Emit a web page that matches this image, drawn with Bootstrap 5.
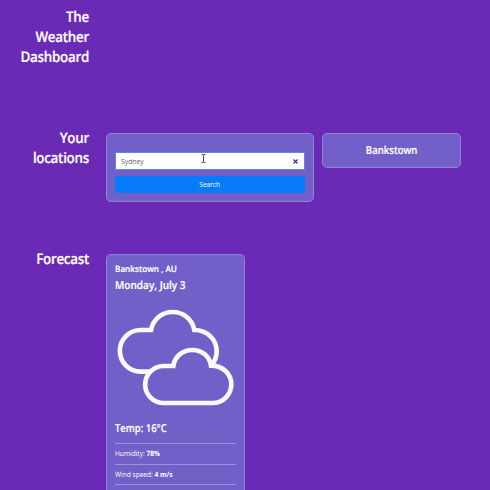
<!DOCTYPE html>
<html lang="en">
<head>
<meta charset="utf-8">
<meta name="viewport" content="width=device-width, initial-scale=1">
<title>The Weather Dashboard</title>
<link href="https://cdn.jsdelivr.net/npm/bootstrap@5.3.0/dist/css/bootstrap.min.css" rel="stylesheet">
<style>
html{overflow:hidden}
body{background:#6a2ab6;color:#fff;font-family:"Open Sans","Noto Sans",sans-serif;text-rendering:geometricPrecision;height:490px;overflow:hidden}
.dash-row{height:121px;padding-top:12px}
.dash-row.last{height:248px}
.dash-row.first{padding-top:0}
.side{width:89px;flex:none;font-size:14.7px;line-height:20px;font-weight:600;margin:-5px 17px 0 0;letter-spacing:-.3px;transform:scaleX(.912);transform-origin:89px 0}
.side,.place,.city,.day,.temp{-webkit-text-stroke:.2px #fff}
.first .side{margin-top:7px}
.panel{background:#725fc7;border:1px solid #8b84db;border-radius:5px}
.search-panel{width:208px;height:69px;padding:18px 8px 8px}
.field{height:18px;border:1px solid #5b86ea;border-radius:1px;background:#fff;padding:0 5px}
.field input{font-size:7.5px;line-height:15px;color:#62606f;width:60px;transform:scaleX(.91);transform-origin:left}
.clear{width:5px;height:5px;margin-right:1px}
.pointer{left:200px;top:154px;width:7px;height:9px}
.go{height:17px;margin-top:6px;border-radius:0;border:0;background:#087bfa;font-size:7.4px;line-height:17px;color:#fff}
.go:hover{background:#087bfa;color:#fff}
.place{width:139px;height:35px;margin-left:8px;font-size:11px;line-height:33px;font-weight:600}
.slim{display:inline-block;transform:scaleX(.89);transform-origin:left}
.place .slim,.go .slim{transform-origin:center}
.place .slim{transform:scaleX(.87)}
.forecast{width:139px;height:236px;padding:7px 8px 0;border-bottom:0;border-radius:5px 5px 0 0}
.city{font-size:8.6px;line-height:14px;font-weight:600}
.city .slim{transform:scaleX(.95)}
.day{font-size:11px;line-height:14px;font-weight:600;margin-top:3px}
.day .slim{transform:scaleX(.915)}
.sky{width:140px;height:115px;margin:7px -10px 0}
.temp{font-size:11px;line-height:14px;font-weight:600;margin-top:7px;margin-bottom:7px}
.temp .slim{transform:scaleX(.86)}
.fact{border-top:1px solid #9296df;height:20.6px;font-size:7.4px;line-height:20.6px}
.fact:last-child{height:5px}
</style>
<script src="https://cdn.jsdelivr.net/npm/bootstrap@5.3.0/dist/js/bootstrap.bundle.min.js"></script>
</head>
<body>
<header class="dash-row first d-flex">
  <h1 class="side text-end">The<br>Weather<br>Dashboard</h1>
</header>
<main>
<section class="dash-row d-flex align-items-start">
  <h2 class="side text-end">Your<br>locations</h2>
  <form class="panel search-panel">
    <div class="field d-flex align-items-center justify-content-between">
      <input class="border-0 bg-transparent p-0" type="text" value="Sydney" aria-label="City">
      <svg class="clear" viewBox="0 0 5 5" stroke="#35328c" stroke-width="1.200"><path d="M.5.5l4 4M4.500.5l-4 4"/></svg>
    </div>
    <button type="button" class="btn go w-100 p-0 d-block"><span class="slim">Search</span></button>
  </form>
  <div class="panel place text-center"><span class="slim">Bankstown</span></div>
</section>
<section class="dash-row last d-flex align-items-start">
  <h2 class="side text-end">Forecast</h2>
  <article class="panel forecast">
    <div class="city"><span class="slim">Bankstown , AU</span></div>
    <div class="day"><span class="slim">Monday, July 3</span></div>
    <svg class="sky d-block" viewBox="0 0 420 345" fill="none" stroke="#fafafa" stroke-width="14">
      <path d="M134 215H107A62 62 0 0 1 107 90H138C144 58 171 36 203 36S262 58 268 90C306 90 335 118 335 154C335 169 331 181 322 193"/>
      <path d="M176 309A55.500 55.500 0 0 1 176 198H205C209 169 233 150 262 150S314 169 318 197C353 197 379 221 379 253A56 56 0 0 1 323 309Z"/>
    </svg>
    <div class="temp"><span class="slim">Temp: 16°C</span></div>
    <div class="fact"><span class="slim">Humidity: <b>78%</b></span></div>
    <div class="fact"><span class="slim">Wind speed: <b>4 m/s</b></span></div>
    <div class="fact"></div>
  </article>
</section>
</main>
<svg class="pointer position-absolute" viewBox="0 0 7 9" fill="none" stroke="#4c4966" stroke-width="1"><path d="M1.500.5H3L3.500 1L4 .5H5.500M3.500 1V8M1.500 8.500H3L3.500 8L4 8.500H5.500"/></svg>
</body>
</html>
